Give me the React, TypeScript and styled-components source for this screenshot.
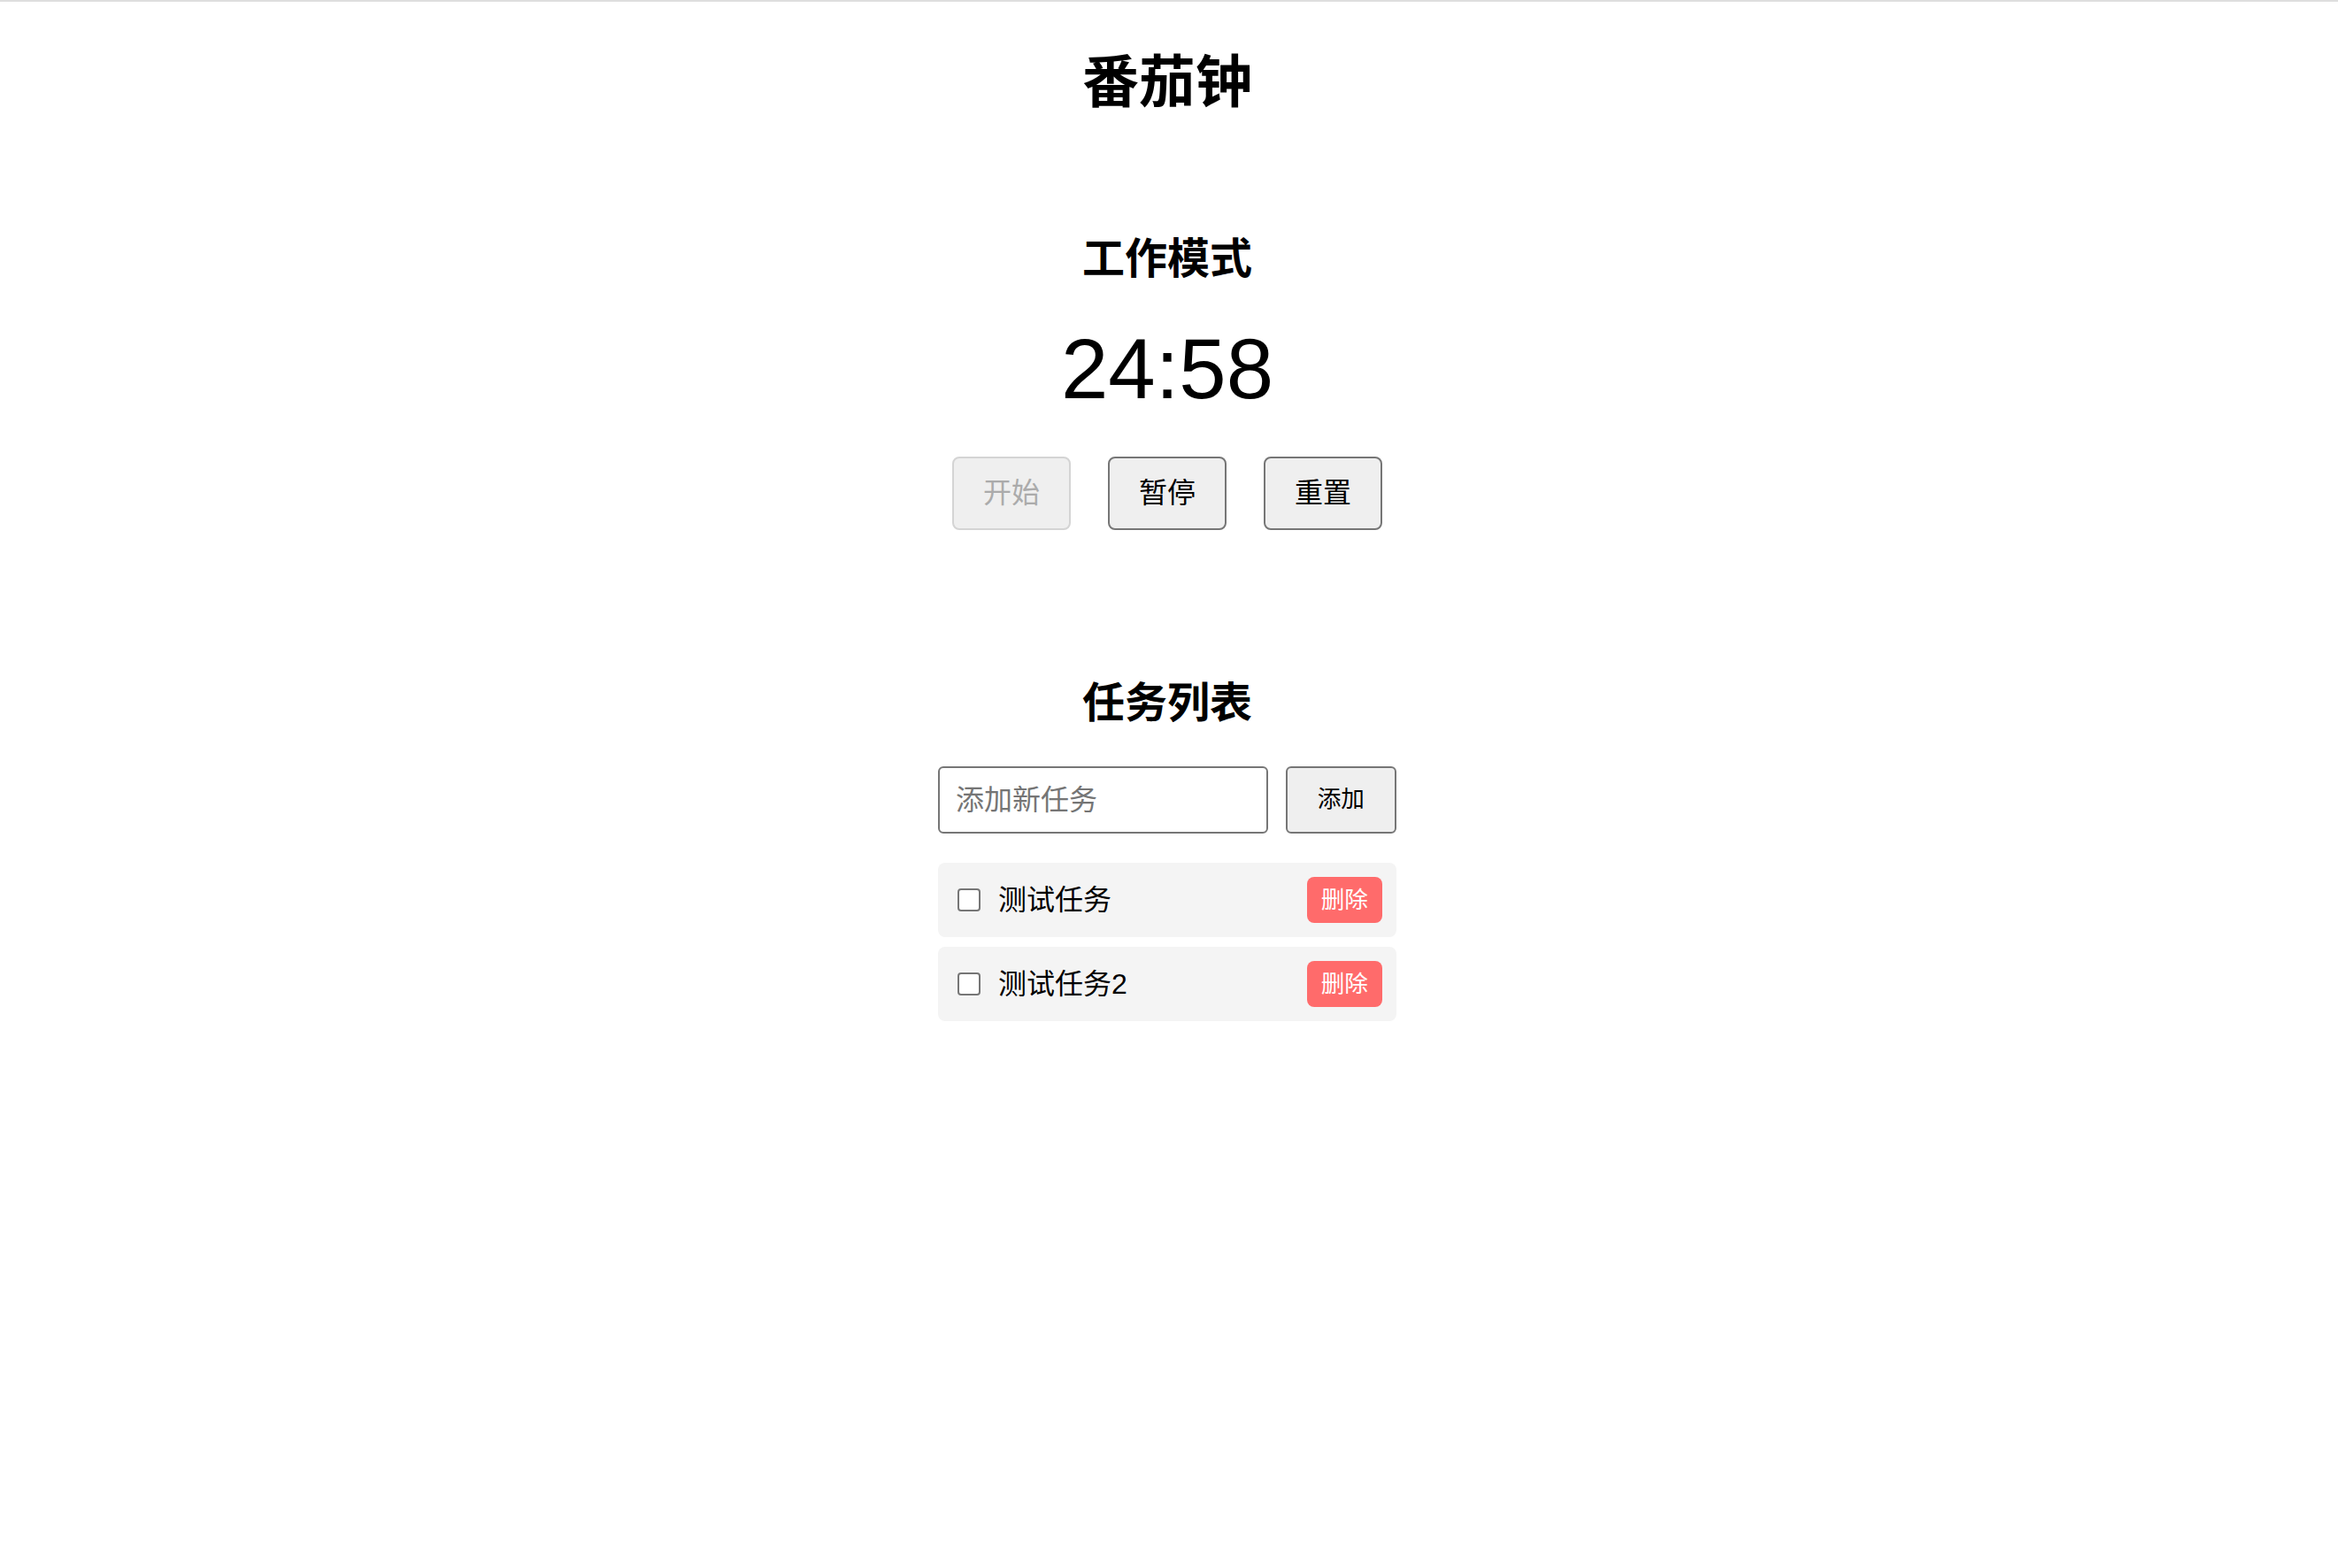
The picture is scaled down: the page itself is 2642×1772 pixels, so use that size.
import React, { useState } from "react";
import styled, { createGlobalStyle } from "styled-components";

const GlobalStyle = createGlobalStyle`
  html, body {
    margin: 0;
    padding: 0;
    background: #ffffff;
  }
  body {
    font-family: "Liberation Sans", "Noto Sans CJK SC", sans-serif;
    color: #000000;
  }
  * {
    box-sizing: border-box;
  }
`;

const Page = styled.div`
  min-height: 100vh;
  border-top: 2px solid #dedede;
  padding-right: 4px;
  display: flex;
  flex-direction: column;
  align-items: center;
  text-align: center;
`;

const Title = styled.h1`
  margin: 53px 0 0;
  font-size: 64px;
  line-height: 77px;
  font-weight: 700;
`;

const Heading = styled.h2<{ $top: number }>`
  margin: ${(p) => p.$top}px 0 0;
  font-size: 48px;
  line-height: 58px;
  font-weight: 700;
`;

const TimerSection = styled.section`
  display: flex;
  flex-direction: column;
  align-items: center;
`;

const Clock = styled.div`
  margin-top: 40px;
  font-size: 96px;
  line-height: 110px;
`;

const Controls = styled.div`
  margin-top: 44px;
  display: flex;
  gap: 42px;
`;

const ControlButton = styled.button`
  font-family: inherit;
  font-size: 32px;
  line-height: 39px;
  padding: 20px 33px;
  border: 2px solid #767676;
  border-radius: 8px;
  background: #efefef;
  color: #000000;
  cursor: pointer;

  &:disabled {
    border-color: #d4d4d4;
    color: #ababab;
    cursor: default;
  }
`;

const TaskSection = styled.section`
  margin-top: 167px;
  width: 518px;
  display: flex;
  flex-direction: column;
  align-items: stretch;
`;

const InputRow = styled.div`
  margin-top: 42px;
  display: flex;
  gap: 20px;
`;

const TaskInput = styled.input`
  flex: 1;
  min-width: 0;
  font-family: inherit;
  font-size: 32px;
  line-height: 40px;
  padding: 16px 18px;
  border: 2px solid #767676;
  border-radius: 6px;
  color: #000000;
  outline: none;

  &::placeholder {
    color: #757575;
  }
`;

const AddButton = styled.button`
  font-family: inherit;
  font-size: 26.67px;
  line-height: 32px;
  padding: 0 34px 2px;
  border: 2px solid #767676;
  border-radius: 6px;
  background: #efefef;
  color: #000000;
  cursor: pointer;
`;

const TaskList = styled.ul`
  list-style: none;
  margin: 33px 0 0;
  padding: 0;
  display: flex;
  flex-direction: column;
  gap: 11px;
`;

const TaskItem = styled.li`
  display: flex;
  align-items: center;
  justify-content: space-between;
  padding: 16px;
  background: #f4f4f4;
  border-radius: 8px;
`;

const TaskLabel = styled.label`
  display: flex;
  align-items: center;
  font-size: 32px;
  line-height: 40px;
  text-align: left;
`;

const Check = styled.input`
  appearance: none;
  width: 26px;
  height: 26px;
  margin: 0 20px 0 6px;
  border: 2px solid #767676;
  border-radius: 4px;
  background: #ffffff;
  flex-shrink: 0;

  &:checked {
    background: #0075ff;
    border-color: #0075ff;
  }
`;

const TaskText = styled.span<{ $done: boolean }>`
  text-decoration: ${(p) => (p.$done ? "line-through" : "none")};
  color: ${(p) => (p.$done ? "#888888" : "#000000")};
`;

const DeleteButton = styled.button`
  font-family: inherit;
  font-size: 26.67px;
  line-height: 32px;
  padding: 10px 16px;
  border: none;
  border-radius: 8px;
  background: #ff6b6b;
  color: #ffffff;
  cursor: pointer;
`;

type Task = { id: number; text: string; done: boolean };

export default function App() {
  const [tasks, setTasks] = useState<Task[]>([
    { id: 1, text: "测试任务", done: false },
    { id: 2, text: "测试任务2", done: false },
  ]);
  const [draft, setDraft] = useState("");

  const addTask = () => {
    if (!draft.trim()) return;
    setTasks([...tasks, { id: Date.now(), text: draft.trim(), done: false }]);
    setDraft("");
  };

  const toggle = (id: number) =>
    setTasks(tasks.map((t) => (t.id === id ? { ...t, done: !t.done } : t)));

  const remove = (id: number) => setTasks(tasks.filter((t) => t.id !== id));

  return (
    <Page>
      <GlobalStyle />
      <Title>番茄钟</Title>

      <TimerSection>
        <Heading $top={132}>工作模式</Heading>
        <Clock>24:58</Clock>
        <Controls>
          <ControlButton disabled>开始</ControlButton>
          <ControlButton>暂停</ControlButton>
          <ControlButton>重置</ControlButton>
        </Controls>
      </TimerSection>

      <TaskSection>
        <Heading $top={0}>任务列表</Heading>
        <InputRow>
          <TaskInput
            placeholder="添加新任务"
            value={draft}
            onChange={(e) => setDraft(e.target.value)}
          />
          <AddButton onClick={addTask}>添加</AddButton>
        </InputRow>
        <TaskList>
          {tasks.map((t) => (
            <TaskItem key={t.id}>
              <TaskLabel>
                <Check
                  type="checkbox"
                  checked={t.done}
                  onChange={() => toggle(t.id)}
                />
                <TaskText $done={t.done}>{t.text}</TaskText>
              </TaskLabel>
              <DeleteButton onClick={() => remove(t.id)}>删除</DeleteButton>
            </TaskItem>
          ))}
        </TaskList>
      </TaskSection>
    </Page>
  );
}
